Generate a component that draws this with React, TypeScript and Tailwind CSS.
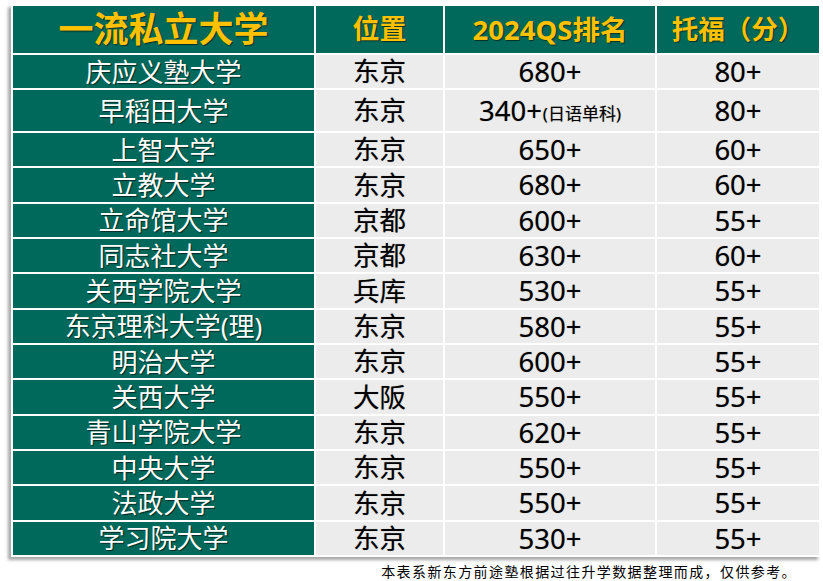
import React from "react"

type Row = {
  name: string
  city: string
  qs: string
  note?: string
  toefl: string
}

const rows: Row[] = [
  { name: "庆应义塾大学", city: "东京", qs: "680+", toefl: "80+" },
  { name: "早稻田大学", city: "东京", qs: "340+", note: "(日语单科)", toefl: "80+" },
  { name: "上智大学", city: "东京", qs: "650+", toefl: "60+" },
  { name: "立教大学", city: "东京", qs: "680+", toefl: "60+" },
  { name: "立命馆大学", city: "京都", qs: "600+", toefl: "55+" },
  { name: "同志社大学", city: "京都", qs: "630+", toefl: "60+" },
  { name: "关西学院大学", city: "兵库", qs: "530+", toefl: "55+" },
  { name: "东京理科大学(理)", city: "东京", qs: "580+", toefl: "55+" },
  { name: "明治大学", city: "东京", qs: "600+", toefl: "55+" },
  { name: "关西大学", city: "大阪", qs: "550+", toefl: "55+" },
  { name: "青山学院大学", city: "东京", qs: "620+", toefl: "55+" },
  { name: "中央大学", city: "东京", qs: "550+", toefl: "55+" },
  { name: "法政大学", city: "东京", qs: "550+", toefl: "55+" },
  { name: "学习院大学", city: "东京", qs: "530+", toefl: "55+" },
]

const font = "font-['Noto_Sans','Noto_Sans_CJK_SC',sans-serif]"

const headCell =
  "flex items-center justify-center bg-[#00695b] text-[#ffc000] font-bold [text-shadow:1px_1px_1px_rgba(0,0,0,0.55)]"
const nameCell =
  "flex items-center justify-center bg-[#00695b] text-white text-[26px] leading-none [text-shadow:1px_1px_1px_rgba(0,0,0,0.6)]"
const grayCell =
  "flex items-center justify-center bg-[#ececec] text-black leading-none [text-shadow:0_0_1px_rgba(0,0,0,0.4)]"

export default function App() {
  return (
    <div className={`w-[823px] h-[581px] bg-white ${font}`}>
      <div className="ml-[11px] mt-[4px] w-[810px] bg-white p-[2px] shadow-[-3px_3px_3px_rgba(0,0,0,0.35)]">
        <div className="grid grid-cols-[301px_127px_210px_162px] grid-rows-[47px_33px_41px_repeat(12,33.33px)] gap-[2px]">
          <div className={`${headCell} text-[35px]`}>一流私立大学</div>
          <div className={`${headCell} text-[27px]`}>位置</div>
          <div className={`${headCell} text-[27.5px]`}>2024QS排名</div>
          <div className={`${headCell} text-[26.5px]`}>托福（分）</div>

          {rows.map((r) => (
            <React.Fragment key={r.name}>
              <div className={nameCell}>{r.name}</div>
              <div className={`${grayCell} text-[26.5px]`}>{r.city}</div>
              <div className={`${grayCell} text-[27.5px]`}>
                {r.qs}
                {r.note ? <span className="text-[17px] ml-[1px] mt-[6px]">{r.note}</span> : null}
              </div>
              <div className={`${grayCell} text-[27.5px]`}>{r.toefl}</div>
            </React.Fragment>
          ))}
        </div>
      </div>
      <div className="flex justify-end pr-[26px] mt-[5px]">
        <p className="text-[14px] leading-[20px] tracking-[1.4px] text-black">
          本表系新东方前途塾根据过往升学数据整理而成，仅供参考。
        </p>
      </div>
    </div>
  )
}
